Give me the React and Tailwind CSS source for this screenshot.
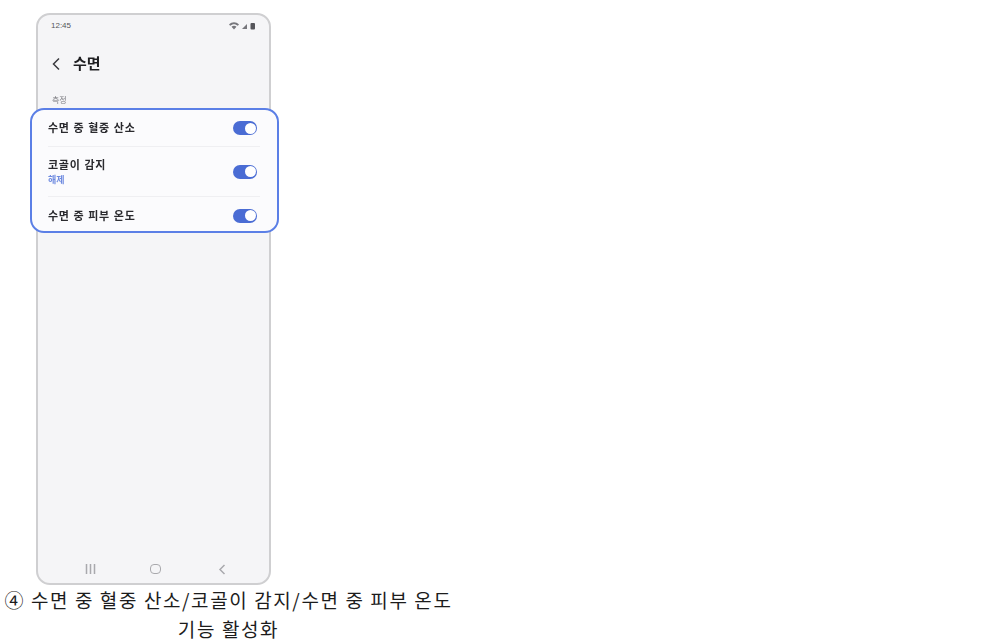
import React from 'react';

const Toggle = () => (
    <div className="w-[24px] h-[14px] rounded-full bg-[#4a6cd4] flex items-center justify-end pr-[1.5px] shrink-0">
        <div className="w-[11px] h-[11px] rounded-full bg-white"/>
    </div>
);

const Row = ({ title, sub, divider, className }) => (
    <div className={`ml-[16px] mr-[17px] flex items-center justify-between pr-[3px] ${divider ? 'border-b border-[#efeff2]' : ''} ${className}`}>
        <div className="flex flex-col">
            <span className="text-[11px] leading-[14px] font-bold text-[#2a2a2e] tracking-[0.75px]">{title}</span>
            {sub && <span className="text-[9px] leading-[10px] mt-[3px] text-[#6f8be0] font-bold">{sub}</span>}
        </div>
        <Toggle/>
    </div>
);

const App = () => {
    return (
        <div className="w-[999px] h-[643px] bg-white overflow-hidden pt-[13px] font-['Liberation_Sans','Noto_Sans_CJK_KR',sans-serif]">
            <div className="ml-[36px] w-[235px] h-[572px] rounded-[14px] border-2 border-[#cfcfd1] bg-[#f5f5f7] flex flex-col blur-[0.5px]">
                <div className="flex items-center justify-between pl-[13px] pr-[13px] pt-[4px] h-[18px]">
                    <span className="text-[8px] text-[#55555a]">12:45</span>
                    <svg width="27" height="8" viewBox="0 0 27 8" fill="#77777c">
                        <path d="M0 2.5C3-.5 7-.5 10 2.5L8.8 3.8C6.5 1.6 3.5 1.6 1.2 3.8ZM2.5 4.8C4 3.4 6 3.4 7.5 4.8L5 7.5Z"/>
                        <path d="M13 7L18 2V7Z"/>
                        <rect x="21.5" y="1" width="4.5" height="6.5" rx="1" fill="#55555a"/>
                    </svg>
                </div>
                <div className="flex items-center gap-[11px] pl-[13px] mt-[21px] h-[20px]">
                    <svg width="11" height="14" viewBox="0 0 11 14" fill="none" stroke="#3a3a3e" strokeWidth="1.5">
                        <path d="M8 1.5L2.5 7L8 12.5"/>
                    </svg>
                    <span className="text-[15px] font-bold text-[#1f1f22] leading-[20px]">수면</span>
                </div>
                <div className="pl-[14px] mt-[22px] text-[8px] leading-[10px] text-[#7b7b80]">측정</div>
                <div className="mt-[2px] -ml-[8px] -mr-[10px] h-[125px] rounded-[14px] border-2 border-[#5b7fe6] bg-[#fbfbfd] flex flex-col">
                    <Row title="수면 중 혈중 산소" divider className="h-[37px]"/>
                    <Row title="코골이 감지" sub="해제" divider className="h-[50px]"/>
                    <Row title="수면 중 피부 온도" className="h-[34px] pt-[3px]"/>
                </div>
                <div className="mt-auto h-[28px] flex items-center pl-[47px] gap-[54px]">
                    <svg width="11" height="10" viewBox="0 0 11 10" stroke="#a9a9ad" strokeWidth="1.5">
                        <path d="M1.5 0V10M5.5 0V10M9.5 0V10"/>
                    </svg>
                    <div className="w-[11px] h-[10px] rounded-[4px] border-[1.5px] border-[#a9a9ad]"/>
                    <svg className="ml-[3px]" width="8" height="11" viewBox="0 0 8 11" fill="none" stroke="#a9a9ad" strokeWidth="1.5">
                        <path d="M6.5 1L2 5.5L6.5 10"/>
                    </svg>
                </div>
            </div>
            <div className="w-[457px] text-center text-[19px] leading-[29px] text-[#1c1c1c] tracking-[1.6px] font-['Noto_Sans_CJK_KR',sans-serif]">
                ④ 수면 중 혈중 산소/코골이 감지/수면 중 피부 온도<br/>기능 활성화
            </div>
        </div>
    );
};

export default App;
